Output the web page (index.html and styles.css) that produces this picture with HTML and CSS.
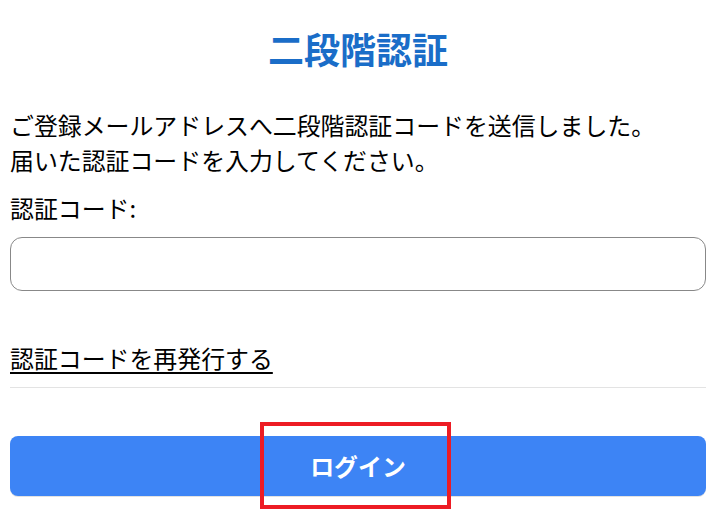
FILE: index.html
```html
<!DOCTYPE html>
<html lang="ja">
<head>
<meta charset="utf-8">
<title>二段階認証</title>
<link rel="stylesheet" href="styles.css">
</head>
<body>
<main class="page">
  <h1 class="title">二段階認証</h1>
  <p class="message">ご登録メールアドレスへ二段階認証コードを送信しました。<br>届いた認証コードを入力してください。</p>
  <label class="label" for="code">認証コード:</label>
  <input class="code-input" id="code" type="text">
  <div class="resend-row"><a class="resend" href="#">認証コードを再発行する</a></div>
  <div class="actions">
    <button class="login-btn" type="button">ログイン</button>
    <div class="highlight"></div>
  </div>
</main>
</body>
</html>
```
FILE: styles.css
```css
* { box-sizing: border-box; }
html, body { margin: 0; padding: 0; background: #fff; }
body {
  font-family: "Noto Sans CJK JP", "Noto Sans", sans-serif;
  font-size: 23.9px;
  line-height: 1.5;
  color: #000;
  min-height: 524px;
}
.page {
  padding: 21px 9px 28px 10px;
  display: flex;
  flex-direction: column;
}
.title {
  margin: 0;
  text-align: center;
  font-size: 36px;
  line-height: 54px;
  font-weight: 700;
  color: #1a6dc8;
}
.message {
  margin: 32px 0 0;
  line-height: 35px;
}
.label {
  display: block;
  margin-top: 13px;
  line-height: 35px;
}
.code-input {
  margin-top: 12px;
  height: 54px;
  width: 100%;
  border: 1px solid #888;
  border-radius: 12px;
  font: inherit;
  padding: 0 12px;
  background: #fff;
}
.resend-row {
  margin-top: 49px;
  padding-bottom: 12px;
  border-bottom: 1px solid #e3e3e3;
  line-height: 35px;
}
.resend {
  color: #000;
  text-decoration: underline;
  text-decoration-thickness: 2px;
  text-underline-offset: 4px;
}
.actions {
  position: relative;
  margin-top: 48px;
}
.login-btn {
  display: block;
  width: 100%;
  height: 60px;
  border: none;
  border-radius: 8px;
  background: #3d84f5;
  color: #fff;
  font: inherit;
  font-weight: 700;
  box-shadow: 0 1px 0 #e2e2e2;
}
.highlight {
  position: absolute;
  left: 250px;
  top: -14px;
  width: 191px;
  height: 87px;
  border: 4px solid #ed1c24;
  pointer-events: none;
}
```
